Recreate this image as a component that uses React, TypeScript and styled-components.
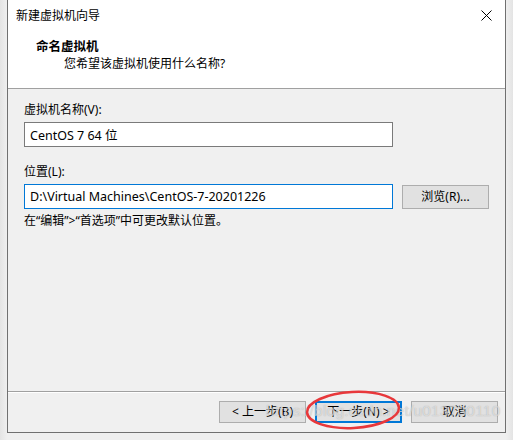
import React from 'react';
import styled, { createGlobalStyle } from 'styled-components';

const GlobalStyle = createGlobalStyle`
  html, body {
    margin: 0;
    padding: 0;
    background: #ececec;
  }
  * {
    box-sizing: border-box;
  }
`;

const uiFont = `"Noto Sans", "Noto Sans CJK SC", sans-serif`;

const Desktop = styled.div`
  position: relative;
  width: 513px;
  height: 440px;
  padding-left: 7px;
  background: linear-gradient(to right, #e4e4e4 0, #efefef 7px, #efefef 506px, #e4e4e4 513px);
  font-family: ${uiFont};
  font-size: 12px;
  color: #000;
  overflow: hidden;
`;

const Window = styled.div`
  width: 499px;
  height: 433px;
  border: 1px solid #707070;
  border-top: none;
  background: #f0f0f0;
  display: flex;
  flex-direction: column;
`;

const Header = styled.div`
  height: 89px;
  background: #fff;
  border-bottom: 1px solid #a0a0a0;
  display: flex;
  flex-direction: column;
`;

const TitleBar = styled.div`
  height: 31px;
  display: flex;
  align-items: center;
  justify-content: space-between;
  padding: 0 8px 0 8px;
`;

const Title = styled.span`
  line-height: 16px;
`;

const CloseButton = styled.div`
  width: 30px;
  height: 30px;
  display: flex;
  align-items: center;
  justify-content: center;
  margin-right: -4px;
`;

const Heading = styled.div`
  padding-left: 28px;
  margin-top: 8px;
  font-weight: bold;
  font-size: 12.5px;
  line-height: 16px;
`;

const SubHeading = styled.div`
  padding-left: 56px;
  margin-top: 1px;
  line-height: 16px;
`;

const Body = styled.div`
  flex: 1;
  padding: 13px 16px 0 16px;
  display: flex;
  flex-direction: column;
`;

const Label = styled.div<{ $gap?: number }>`
  line-height: 16px;
  margin-top: ${(p) => p.$gap ?? 0}px;
  margin-bottom: 4px;
`;

const FieldRow = styled.div`
  display: flex;
  align-items: center;
  gap: 9px;
`;

const TextBox = styled.div<{ $focused?: boolean }>`
  width: 369px;
  height: 25px;
  border: 1px solid ${(p) => (p.$focused ? '#0078d7' : '#7a7a7a')};
  background: #fff;
  display: flex;
  align-items: center;
  padding-left: 5px;
  font-size: 12.5px;
  color: #000;
`;

const Hint = styled.div`
  margin-top: 4px;
  line-height: 16px;
`;

const Footer = styled.div`
  height: 41px;
  border-top: 1px solid #a0a0a0;
  box-shadow: inset 0 1px 0 #fff;
  display: flex;
  justify-content: flex-end;
  align-items: flex-start;
  padding: 9px 7px 0 0;
  gap: 9px;
`;

const Button = styled.div<{ $primary?: boolean }>`
  width: 87px;
  height: 22px;
  background: #e1e1e1;
  border: ${(p) => (p.$primary ? '2px solid #0078d7' : '1px solid #adadad')};
  display: flex;
  align-items: center;
  justify-content: center;
  line-height: 16px;
`;

const BrowseButton = styled(Button)`
  height: 24px;
`;

const Annotation = styled.svg`
  position: absolute;
  left: 300px;
  top: 385px;
  pointer-events: none;
`;

const Watermark = styled.div`
  position: absolute;
  left: 266px;
  top: 402px;
  font-family: "Liberation Sans", Arial, sans-serif;
  font-size: 15.5px;
  color: rgba(255, 255, 255, 0.55);
  text-shadow: 0 0 1px rgba(120, 120, 120, 0.6);
  letter-spacing: 0.2px;
  pointer-events: none;
  white-space: nowrap;
`;

const App = (): JSX.Element => {
  return (
    <>
      <GlobalStyle />
      <Desktop>
        <Window>
          <Header>
            <TitleBar>
              <Title>新建虚拟机向导</Title>
              <CloseButton>
                <svg width="11" height="11" viewBox="0 0 11 11">
                  <path d="M0.5 0.5 L10.5 10.5 M10.5 0.5 L0.5 10.5" stroke="#000" strokeWidth="1" />
                </svg>
              </CloseButton>
            </TitleBar>
            <Heading>命名虚拟机</Heading>
            <SubHeading>您希望该虚拟机使用什么名称?</SubHeading>
          </Header>
          <Body>
            <Label>虚拟机名称(V):</Label>
            <TextBox>CentOS 7 64 位</TextBox>
            <Label $gap={17}>位置(L):</Label>
            <FieldRow>
              <TextBox $focused>D:\Virtual Machines\CentOS-7-20201226</TextBox>
              <BrowseButton>浏览(R)...</BrowseButton>
            </FieldRow>
            <Hint>在“编辑”&gt;“首选项”中可更改默认位置。</Hint>
          </Body>
          <Footer>
            <Button>&lt; 上一步(B)</Button>
            <Button $primary>下一步(N) &gt;</Button>
            <Button>取消</Button>
          </Footer>
        </Window>
        <Watermark>https://blog.csdn.net/u013730110</Watermark>
        <Annotation width="110" height="50" viewBox="0 0 110 50">
          <ellipse
            cx="53"
            cy="25"
            rx="46"
            ry="18"
            fill="none"
            stroke="#e8383b"
            strokeWidth="2.5"
            transform="rotate(-3 53 25)"
          />
        </Annotation>
      </Desktop>
    </>
  );
};

export default App;
